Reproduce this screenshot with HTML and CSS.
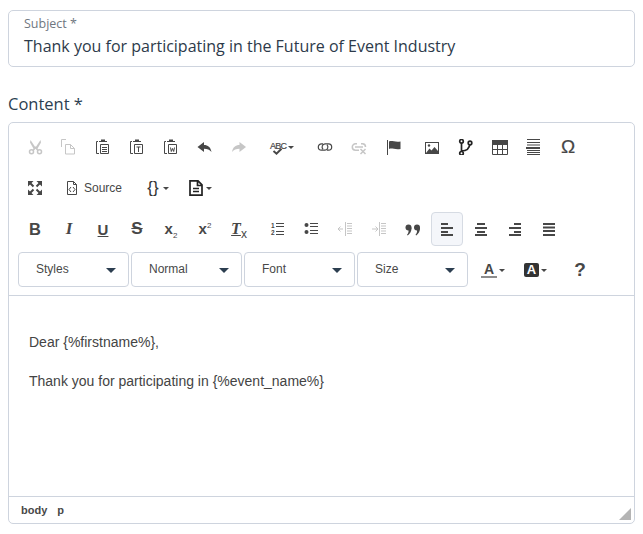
FILE: index.html
```html
<!DOCTYPE html>
<html lang="en">
<head>
<meta charset="utf-8">
<title>Email content</title>
<link rel="stylesheet" href="styles.css">
</head>
<body>
<div class="subject">
  <div class="subject-label">Subject *</div>
  <div class="subject-value">Thank you for participating in the Future of Event Industry</div>
</div>
<div class="content-label">Content *</div>
<div class="editor">
  <div class="toolbar">
    <div class="row">
      <div class="group">
        <span class="btn off"><svg class="ic" viewBox="0 0 16 16"><path d="M3.500 1l5 7.500L7 10.500 3 3.500zM13.500 1L8.500 8.500 10 10.500l4-7z"/><circle class="ln lw" cx="4.500" cy="12.800" r="2"/><circle class="ln lw" cx="12.500" cy="12.800" r="2"/><path class="ln lw" d="M6 11.500l2.500-3 2.500 3"/></svg></span>
        <span class="btn off"><svg class="ic" viewBox="0 0 16 16"><path class="ln" d="M5 .500H.500V8M4.500 5.500H9.500L13.500 9.500V15H4.500z"/><path class="ln" d="M9.500 5.500v4h4"/></svg></span>
        <span class="btn"><svg class="ic" viewBox="0 0 16 16"><g transform="translate(-1 0)"><path class="ln" d="M4 2.500H2.500v12H5"/><path d="M5 3V2h2V0.500h4V2h2v1z"/><path class="ln" d="M6.500 5.500h8v9h-8z"/><path class="ln" d="M8 8.500h5M8 10.500h5M8 12.500h5"/></g></svg></span>
        <span class="btn"><svg class="ic" viewBox="0 0 16 16"><g transform="translate(-1 0)"><path class="ln" d="M4 2.500H2.500v12H5"/><path d="M5 3V2h2V0.500h4V2h2v1z"/><path class="ln" d="M6.500 5.500h8v9h-8z"/><path class="ln" d="M8.500 8h4M10.500 8v5"/></g></svg></span>
        <span class="btn"><svg class="ic" viewBox="0 0 16 16"><g transform="translate(-1 0)"><path class="ln" d="M4 2.500H2.500v12H5"/><path d="M5 3V2h2V0.500h4V2h2v1z"/><path class="ln" d="M6.500 5.500h8v9h-8z"/><path class="ln" d="M8.500 8.500l.8 4 1.200-3 1.200 3 .8-4"/></g></svg></span>
        <span class="btn"><svg class="ic" viewBox="0 0 16 16"><path d="M.500 8l6.500-5v3c4 0 6.500 2 7.500 7-2-2.500-4-3.300-7.500-3.300V13z"/></svg></span>
        <span class="btn off"><svg class="ic" viewBox="0 0 16 16"><path d="M15 8L8.500 3v3C4.500 6 2 8 1 13c2-2.500 4-3.300 7.500-3.300V13z"/></svg></span>
      </div>
      <div class="group">
        <span class="drop"><svg class="ic ic-open" viewBox="0 0 16 16"><text class="ic-abc" x="0" y="9.500">ABC</text><path class="ck" d="M3.500 12l3 2.700 5-5"/></svg><i class="caret"></i></span>
      </div>
      <div class="group group-wide">
        <span class="btn"><svg class="ic" viewBox="0 0 16 16"><path class="ln lm" d="M6 4.800H4.500a3.200 3.200 0 0 0 0 6.400H8a3.200 3.200 0 0 0 2-5.400M10 11.200h1.500a3.200 3.200 0 0 0 0-6.400H8a3.200 3.200 0 0 0-2 5.400"/></svg></span>
        <span class="btn off"><svg class="ic" viewBox="0 0 16 16"><path class="ln lw" d="M6 4.800H4.500a3.200 3.200 0 0 0 0 6.400H8M10 4.800h1.500a3.200 3.200 0 0 1 3 3.200M4 8h8"/><path class="ln lw" d="M9.500 10l5 5M14.500 10l-5 5"/></svg></span>
        <span class="btn"><svg class="ic" viewBox="0 0 16 16"><path d="M2 1h1v15H2z"/><path d="M4 2.500c3-1.500 5.500 1 11.500 0V10c-6 1-8.500-1.500-11.500 0z"/></svg></span>
      </div>
      <div class="group">
        <span class="btn"><svg class="ic" viewBox="0 0 16 16"><path d="M1 3h14v12H1zm1 1v10h12V4z"/><path d="M2 14l3.500-4.500 2 2 3-3.500L14 12v2z"/><circle cx="5" cy="6.500" r="1.200"/></svg></span>
        <span class="btn"><svg class="ic ic-dark" viewBox="0 0 16 16"><path class="ln lb" d="M3.500 2v13M3.500 12c5 0 8-2 8.500-7.500"/><circle class="ring" cx="3.500" cy="2.300" r="1.800"/><circle class="ring" cx="3.500" cy="14.300" r="1.800"/><circle class="ring" cx="12" cy="4" r="1.800"/></svg></span>
        <span class="btn"><svg class="ic" viewBox="0 0 16 16"><path d="M0 1h16v5H0z"/><path class="ln" d="M.5 1.500h15v14H.5zM.5 10.500h15M5.500 5v10.500M10.500 5v10.500"/></svg></span>
        <span class="btn"><svg class="ic" viewBox="0 0 16 16"><path class="ln" d="M1 .500h13M1 3.500h13M1 6h13M1 11.500h13M1 13.500h13M1 15.500h13"/><path d="M0 8h14v2H0z"/></svg></span>
        <span class="btn glyph glyph-omega">Ω</span>
      </div>
    </div>
    <div class="row">
      <div class="group">
        <span class="btn"><svg class="ic" viewBox="0 0 16 16"><path d="M1 1h5.500L1 6.500zM15 1v5.500L9.500 1zM1 15V9.500L6.500 15zM15 15H9.500L15 9.500z"/><path class="ln lx" d="M3 3l3.500 3.500M13 3L9.500 6.500M3 13l3.500-3.500M13 13L9.500 9.500"/></svg></span>
      </div>
      <div class="group">
        <span class="src"><svg class="ic" viewBox="0 0 16 16"><path class="ln" d="M3.500 1.500h6l3 3v10h-9zM9.500 1.500v3h3"/><path class="ln" d="M7 7l-2 2.500 2 2.500M9 7l2 2.500-2 2.500"/></svg><span>Source</span></span>
      </div>
      <div class="group">
        <span class="drop drop-tight"><span class="ic glyph-braces">{}</span><i class="caret"></i></span>
        <span class="drop"><svg class="ic ic-dark" viewBox="0 0 16 16"><path class="ln lb" d="M2 .800h8l4 4v10.400H2zM9.500 1v4.500H14"/><path class="ln lw" d="M5 8.500h6M5 11.500h6"/></svg><i class="caret"></i></span>
      </div>
    </div>
    <div class="row row-tight">
      <div class="group">
        <span class="btn glyph glyph-b">B</span>
        <span class="btn glyph glyph-i">I</span>
        <span class="btn glyph glyph-u">U</span>
        <span class="btn glyph glyph-s">S</span>
        <span class="btn glyph glyph-x"><span>x<sub>2</sub></span></span>
        <span class="btn glyph glyph-x"><span>x<sup>2</sup></span></span>
        <span class="btn glyph glyph-t"><span><u>T</u><sub>x</sub></span></span>
      </div>
      <div class="group">
        <span class="btn"><svg class="ic" viewBox="0 0 16 16"><text class="ic-num" x="2" y="7">1</text><text class="ic-num" x="2" y="14">2</text><path class="ln" d="M7 2.500h8M7 5.500h8M7 10.500h8M7 13.500h8"/></svg></span>
        <span class="btn"><svg class="ic" viewBox="0 0 16 16"><circle cx="3.500" cy="4" r="2"/><circle cx="3.500" cy="11" r="2"/><path class="ln" d="M7 2.500h8M7 5.500h8M7 9.500h8M7 12.500h8"/></svg></span>
        <span class="btn off"><svg class="ic" viewBox="0 0 16 16"><path class="ln" d="M8.500 1v14M10 2.500h5M10 5h5M10 7.500h5M10 10h5M10 12.500h5M1 8h5M3.500 5.500L1 8l2.500 2.500"/></svg></span>
        <span class="btn off"><svg class="ic" viewBox="0 0 16 16"><path class="ln" d="M8.500 1v14M10 2.500h5M10 5h5M10 7.500h5M10 10h5M10 12.500h5M1 8h5M4.500 5.500L7 8l-2.500 2.500"/></svg></span>
        <span class="btn"><svg class="ic" viewBox="0 0 16 16"><circle cx="3.500" cy="6.500" r="3"/><circle cx="12" cy="6.500" r="3"/><path d="M6.500 6.500c.3 3.500-1.500 6.500-3.800 8L2 13.800c1.300-1.300 1.800-3 1.500-4.800zM15 6.500c.3 3.500-1.500 6.500-3.800 8l-.7-.7c1.300-1.300 1.800-3 1.500-4.800z"/></svg></span>
        <span class="btn btn-active"><svg class="ic" viewBox="0 0 16 16"><path d="M2 2h7v2H2zM2 6h12v2H2zM2 10h7v2H2zM2 13h12v2H2z"/></svg></span>
        <span class="btn"><svg class="ic" viewBox="0 0 16 16"><path d="M4 2h8v2H4zM2 6h12v2H2zM4 10h8v2H4zM2 13h12v2H2z"/></svg></span>
        <span class="btn"><svg class="ic" viewBox="0 0 16 16"><path d="M7 2h7v2H7zM2 6h12v2H2zM7 10h7v2H7zM2 13h12v2H2z"/></svg></span>
        <span class="btn"><svg class="ic" viewBox="0 0 16 16"><path d="M2 2h12v2H2zM2 5.500h12v2H2zM2 9h12v2H2zM2 13h12v2H2z"/></svg></span>
      </div>
    </div>
    <div class="row row-last">
      <div class="combos">
        <span class="combo">Styles<i class="combo-arrow"></i></span>
        <span class="combo">Normal<i class="combo-arrow"></i></span>
        <span class="combo">Font<i class="combo-arrow"></i></span>
        <span class="combo">Size<i class="combo-arrow"></i></span>
      </div>
      <span class="drop drop-a"><span class="ic glyph-a">A</span><i class="caret"></i></span>
      <span class="drop drop-bg"><span class="ic glyph-bg"><b>A</b></span><i class="caret"></i></span>
      <span class="btn glyph glyph-help">?</span>
    </div>
  </div>
  <div class="body-area">
    <p class="para">Dear {%firstname%},</p>
    <p class="para">Thank you for participating in {%event_name%}</p>
  </div>
  <div class="statusbar">
    <span class="crumb">body</span>
    <span class="crumb">p</span>
    <svg class="resize" viewBox="0 0 12 12"><path d="M12 0v12H0z"/></svg>
  </div>
</div>
</body>
</html>
```

FILE: styles.css
```css
* { box-sizing: border-box; }
html, body { margin: 0; padding: 0; }
body {
  width: 643px;
  height: 534px;
  padding: 10px 8px 0;
  overflow: hidden;
  background: #fff;
  font-family: "Open Sans", sans-serif;
  color: #2c3e50;
}
.subject {
  height: 57px;
  width: 627px;
  padding: 5px 15px 0;
  border: 1px solid #ced4de;
  border-radius: 5px;
}
.subject-label { font-size: 12.5px; line-height: 16px; color: #70777f; }
.subject-value { font-size: 16px; line-height: 24px; margin-top: 2px; color: #2d3a4a; }
.content-label { font-size: 16.500px; line-height: 24px; margin-top: 25px; margin-bottom: 6px; color: #2c3e50; }
.editor {
  width: 627px;
  height: 402px;
  display: flex;
  flex-direction: column;
  border: 1px solid #ced4de;
  border-radius: 5px;
  font-family: "Liberation Sans", Arial, sans-serif;
}
.toolbar { padding: 7px 0 8px 9px; border-bottom: 1px solid #ced4de; }
.row { display: flex; height: 34px; margin-bottom: 7px; }
.row-tight { margin-bottom: 6px; }
.row-last { height: 35px; margin-bottom: 0; align-items: center; }
.group { display: flex; margin-right: 4px; }
.group-wide { margin-right: 5px; }
.btn {
  width: 32px;
  height: 34px;
  margin: 0 1px;
  display: flex;
  align-items: center;
  justify-content: center;
  border: 1px solid transparent;
  border-radius: 4px;
  flex: none;
}
.btn-active { background: #f4f6fa; border-color: #d6dbe3; }
.off { opacity: .3; }
.ic { width: 16px; height: 16px; display: block; fill: #474747; flex: none; }
.ic-open { overflow: visible; }
.ic-dark { fill: #222; }
.ln { fill: none; stroke: #474747; stroke-width: 1; }
.ic-dark .ln { stroke: #222; }
.lm { stroke-width: 1.200; }
.lw { stroke-width: 1.500; }
.lb { stroke-width: 1.700; }
.lx { stroke-width: 2; }
.ck { fill: none; stroke: #474747; stroke-width: 2; }
.ring { fill: #fff; stroke: #222; stroke-width: 1.700; }
.ic-abc { font-family: "Liberation Sans", sans-serif; font-size: 9px; letter-spacing: -.8px; fill: #474747; stroke: #474747; stroke-width: .2px; }
.ic-num { font-family: "Liberation Sans", sans-serif; font-size: 6.500px; font-weight: 700; fill: #474747; }
.drop {
  height: 34px;
  padding: 0 10px;
  display: flex;
  align-items: center;
  gap: 2px;
}
.drop-tight { padding-right: 9px; }
.caret {
  width: 0;
  height: 0;
  border: 3px solid transparent;
  border-top-color: #474747;
  border-bottom-width: 0;
  margin-top: 1px;
}
.src {
  height: 34px;
  padding: 0 9px 0 8px;
  display: flex;
  align-items: center;
  gap: 4px;
  font-size: 12px;
  color: #474747;
}
.glyph { color: #474747; font-family: "Liberation Sans", sans-serif; font-weight: 700; }
.glyph-omega { font-size: 19px; font-weight: 400; -webkit-text-stroke: .2px #474747; }
.glyph-b { font-size: 16.500px; }
.glyph-i { font-size: 17px; font-style: italic; font-family: "Liberation Serif", serif; }
.glyph-u { font-size: 15px; text-decoration: underline; }
.glyph-s { font-size: 17px; text-decoration: line-through; }
.glyph-x { font-size: 15px; line-height: 16px; }
.glyph-x sub, .glyph-x sup { font-size: 8px; font-weight: 400; line-height: 0; }
.glyph-t { font-size: 16px; font-style: italic; font-family: "Liberation Serif", serif; }
.glyph-t sub { font-size: 12px; font-family: "Liberation Sans", sans-serif; font-style: normal; font-weight: 400; line-height: 0; }
.glyph-braces { font-size: 17px; line-height: 16px; text-align: center; color: #333; }
.combos { display: flex; gap: 2px; }
.combo {
  width: 111px;
  height: 35px;
  padding: 0 12px 2px 17px;
  display: flex;
  align-items: center;
  justify-content: space-between;
  border: 1px solid #ced4de;
  border-radius: 4px;
  font-size: 12px;
  color: #484848;
}
.combo-arrow {
  width: 0;
  height: 0;
  border: 5px solid transparent;
  border-top-color: #2c3e50;
  border-bottom-width: 0;
  margin-top: 4px;
}
.drop-a { padding: 0 10px 0 13px; height: 35px; }
.drop-bg { padding: 0 9px 0 9px; height: 35px; }
.glyph-a {
  font-size: 14px;
  font-weight: 700;
  line-height: 14px;
  text-align: center;
  color: #474747;
  border-bottom: 2px solid #8c8c8c;
  height: 16px;
}
.glyph-bg {
  background: #333;
  border-radius: 2px;
  color: #fff;
  font-size: 13px;
  line-height: 14px;
  width: 15px;
  height: 14px;
  text-align: center;
}
.glyph-help { font-size: 19px; margin-left: 8px; }
.body-area { flex: 1; padding: 36px 20px 0; color: #444; font-size: 14px; line-height: 20px; }
.para { margin: 0 0 19px; }
.statusbar {
  height: 27px;
  display: flex;
  align-items: center;
  gap: 10px;
  padding: 0 3px 0 12px;
  border-top: 1px solid #ced4de;
  font-size: 11px;
  font-weight: 700;
  color: #484848;
}
.resize { width: 12px; height: 12px; margin-left: auto; margin-top: 8px; fill: #b4b4b4; }
```
